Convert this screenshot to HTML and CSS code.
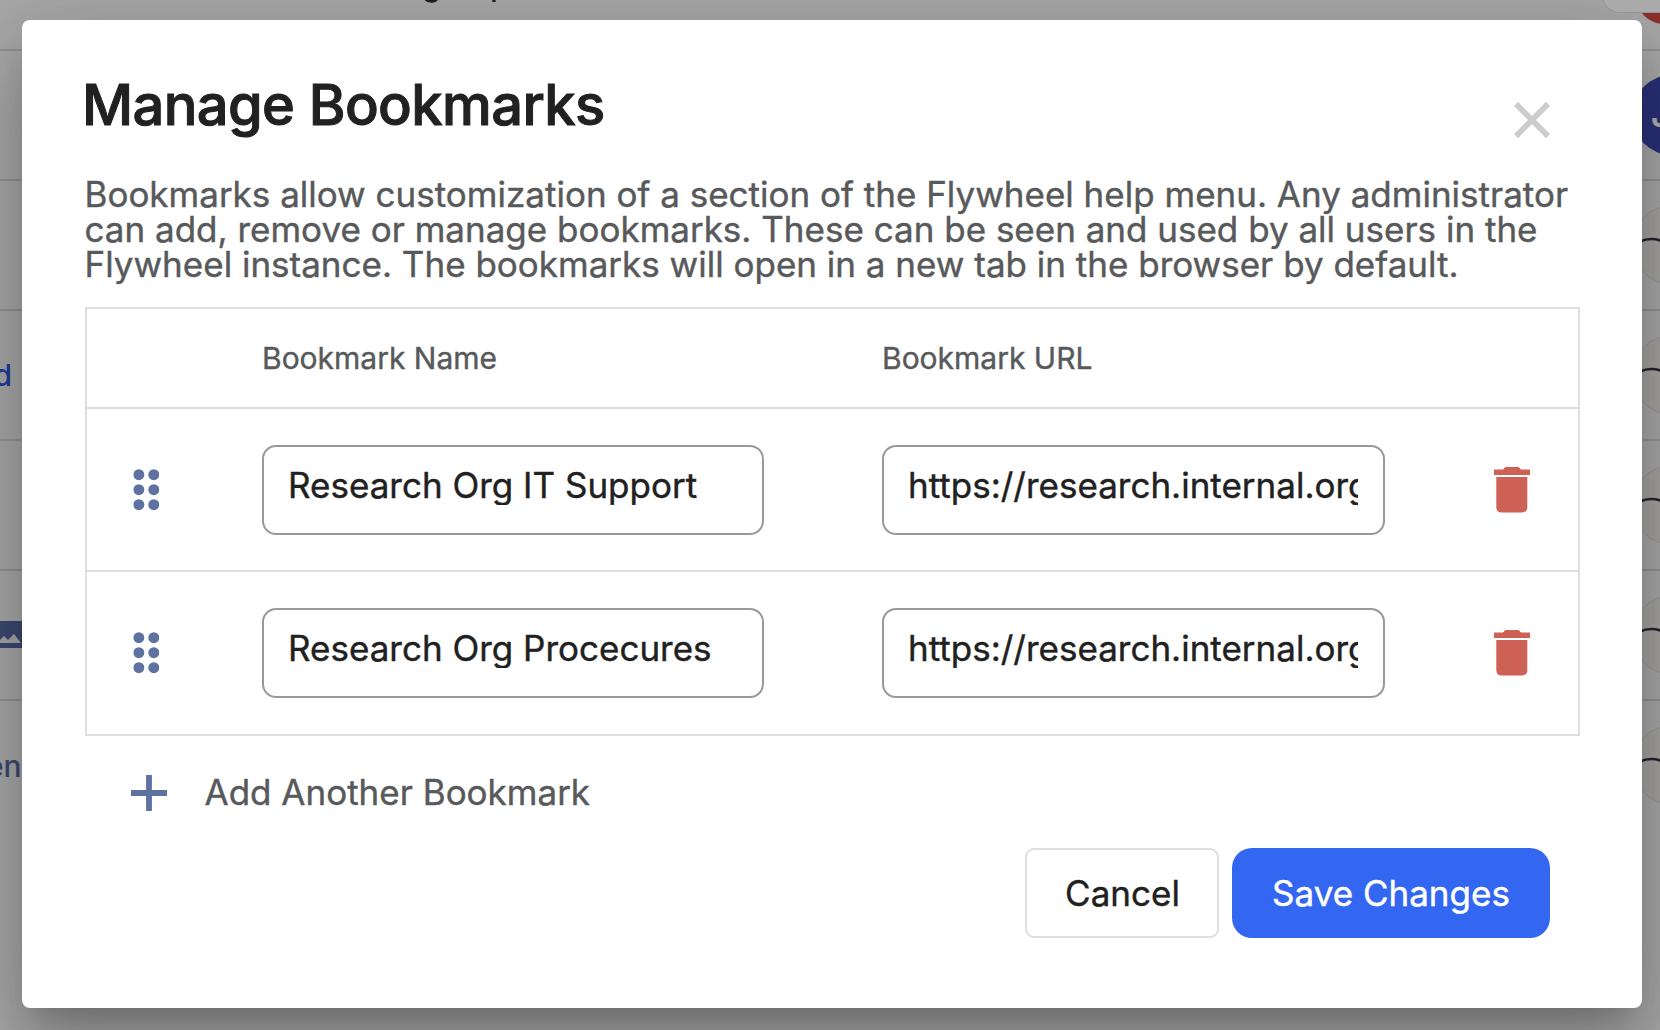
FILE: index.html
```html
<!DOCTYPE html>
<html lang="en">
<head>
  <meta charset="UTF-8">
  <meta name="viewport" content="width=device-width, initial-scale=1.0">
  <title>Manage Bookmarks</title>
  <link rel="stylesheet" href="styles.css">
</head>
<body>
  <!-- Page behind the dialog -->
  <div class="page">
    <div class="page-row page-row-first"><span class="page-heading">group</span></div>
    <div class="page-row"><span class="avatar avatar-blue">J</span></div>
    <div class="page-row"><span class="avatar"><svg width="78" height="78" viewBox="0 0 78 78"><path d="M7 35.5Q18 30.5 30 35.5" /></svg></span></div>
    <div class="page-row"><span class="page-link">d</span><span class="avatar"><svg width="78" height="78" viewBox="0 0 78 78"><path d="M7 35.5Q18 30.5 30 35.5" /></svg></span></div>
    <div class="page-row"><span class="avatar"><svg width="78" height="78" viewBox="0 0 78 78"><path d="M7 35.5Q18 30.5 30 35.5" /></svg></span></div>
    <div class="page-row">
      <svg class="page-image" width="30" height="27" viewBox="0 0 30 27"><path fill="#3b4970" d="M0 0h30v27H0z" /><path fill="#a8a8a8" d="M0 22v-3l4-4 4 4 6-6 7 9z" /></svg>
      <span class="avatar"><svg width="78" height="78" viewBox="0 0 78 78"><path d="M7 35.5Q18 30.5 30 35.5" /></svg></span>
    </div>
    <div class="page-row page-row-last"><span class="page-link page-link-muted">ent</span><span class="avatar"><svg width="78" height="78" viewBox="0 0 78 78"><path d="M7 35.5Q18 30.5 30 35.5" /></svg></span></div>
    <div class="page-panel"></div>
    <div class="page-badge"></div>
  </div>

  <!-- Dialog -->
  <div class="modal">
    <div class="modal-header">
      <h1>Manage Bookmarks</h1>
      <button class="close-button" aria-label="Close">
        <svg width="36" height="36" viewBox="0 0 36 36"><path d="M2 2l32 32M34 2L2 34" stroke="#ccc" stroke-width="5.8" /></svg>
      </button>
    </div>
    <p class="description">Bookmarks allow customization of a section of the Flywheel help menu. Any administrator<br>can add, remove or manage bookmarks. These can be seen and used by all users in the<br>Flywheel instance. The bookmarks will open in a new tab in the browser by default.</p>

    <div class="bookmarks">
      <div class="bookmark-row bookmark-head">
        <span></span>
        <span>Bookmark Name</span>
        <span>Bookmark URL</span>
        <span></span>
      </div>
      <div class="bookmark-row">
        <svg class="drag" width="26" height="42" viewBox="0 0 26 42"><circle cx="5.5" cy="5.7" r="5.5" /><circle cx="20.5" cy="5.7" r="5.5" /><circle cx="5.5" cy="20.7" r="5.5" /><circle cx="20.5" cy="20.7" r="5.5" /><circle cx="5.5" cy="35.7" r="5.5" /><circle cx="20.5" cy="35.7" r="5.5" /></svg>
        <div class="field"><span>Research Org IT Support</span></div>
        <div class="field"><span>https://research.internal.org/support</span></div>
        <svg class="trash" width="36" height="46" viewBox="0 0 36 46"><path d="M0 2.4h9L11.400 0h13.200L27 2.400h9V8H0zM2.300 10h31v30q0 5.500-5.500 5.500h-20q-5.500 0-5.500-5.500z" /></svg>
      </div>
      <div class="bookmark-row">
        <svg class="drag" width="26" height="42" viewBox="0 0 26 42"><circle cx="5.5" cy="5.7" r="5.5" /><circle cx="20.5" cy="5.7" r="5.5" /><circle cx="5.5" cy="20.7" r="5.5" /><circle cx="20.5" cy="20.7" r="5.5" /><circle cx="5.5" cy="35.7" r="5.5" /><circle cx="20.5" cy="35.7" r="5.5" /></svg>
        <div class="field"><span>Research Org Procecures</span></div>
        <div class="field"><span>https://research.internal.org/procedures</span></div>
        <svg class="trash" width="36" height="46" viewBox="0 0 36 46"><path d="M0 2.4h9L11.400 0h13.200L27 2.400h9V8H0zM2.300 10h31v30q0 5.500-5.500 5.500h-20q-5.500 0-5.500-5.500z" /></svg>
      </div>
    </div>

    <button class="add-button">
      <svg width="36" height="36" viewBox="0 0 36 36"><path d="M18 0v36M0 18h36" stroke="#5d72a0" stroke-width="5.8" /></svg>
      <span>Add Another Bookmark</span>
    </button>

    <div class="actions">
      <button class="cancel-button">Cancel</button>
      <button class="save-button">Save Changes</button>
    </div>
  </div>
</body>
</html>
```
FILE: styles.css
```css
* {
  box-sizing: border-box;
}
body {
  margin: 0;
  height: 1030px;
  overflow: hidden;
  padding: 20px 18px 22px 22px;
  position: relative;
  background-color: #a8a8a8;
  font-family: Inter, sans-serif;
  color: #212121;
}
button {
  border: none;
  background: none;
  padding: 0;
  font: inherit;
  color: inherit;
  cursor: pointer;
}
svg {
  display: block;
}

/* Dimmed page */
.page {
  position: absolute;
  inset: 0;
  overflow: hidden;
}
.page-row {
  position: relative;
  height: 130px;
  border-bottom: 2px solid #929292;
}
.page-row-first {
  height: 51px;
}
.page-row-last {
  border-bottom: none;
}
.page-heading {
  position: absolute;
  left: 422px;
  top: -34px;
  font-size: 31px;
  font-weight: 500;
}
.page-link {
  position: absolute;
  right: 1648px;
  top: 46px;
  font-size: 30px;
  line-height: 36px;
  font-weight: 500;
  color: #1f3d99;
}
.page-link-muted {
  right: auto;
  left: -14px;
  top: 47px;
  color: #3b4a6c;
}
.page-image {
  position: absolute;
  left: 0;
  top: 50px;
}
.avatar {
  position: absolute;
  left: 1632px;
  top: 24px;
  width: 80px;
  height: 80px;
  border: 1px solid #969696;
  border-radius: 50%;
  background-color: #a5a4a1;
}
.avatar path {
  fill: none;
  stroke: #23232f;
  stroke-width: 2.5;
}
.avatar-blue {
  border: none;
  background-color: #2a3178;
  color: #b0b0b0;
  font-size: 34px;
  font-weight: 600;
  line-height: 80px;
  padding-left: 19px;
}
.page-panel {
  position: absolute;
  left: 1602px;
  top: -40px;
  width: 100px;
  height: 53px;
  z-index: 2;
  border: 1px solid #949494;
  border-radius: 18px;
  background-color: #aaa;
}
.page-badge {
  position: absolute;
  left: 1636px;
  top: -32px;
  width: 56px;
  height: 56px;
  border-radius: 50%;
  background-color: #8c322c;
}

/* Dialog */
.modal {
  position: relative;
  display: flex;
  flex-direction: column;
  height: 988px;
  padding: 55px 62px 70px 63px;
  border-radius: 8px;
  background-color: #fff;
  box-shadow: 0 22px 30px -14px rgba(0, 0, 0, 0.2), 0 48px 76px 6px rgba(0, 0, 0, 0.14), 0 18px 92px 16px rgba(0, 0, 0, 0.12);
  -webkit-text-stroke: 0.4px;
}
.modal-header {
  display: flex;
  justify-content: space-between;
  height: 92px;
  padding-right: 30px;
}
h1 {
  margin: 0 0 0 -3px;
  font-size: 56px;
  font-weight: 500;
  line-height: 60px;
  letter-spacing: -0.6px;
  -webkit-text-stroke: 1px;
}
.close-button {
  align-self: flex-start;
  margin-top: 27px;
}
.description {
  margin: 10px 0 0 -0.5px;
  height: 130px;
  font-size: 35px;
  line-height: 35px;
  white-space: nowrap;
  color: #58595b;
}
.bookmarks {
  border: 2px solid #dedede;
}
.bookmark-row {
  display: grid;
  grid-template-columns: 175px 620px 608px 36px;
  align-items: center;
  height: 163px;
  border-bottom: 2px solid #dedede;
}
.bookmark-row:last-child {
  height: 162px;
  border-bottom: none;
}
.bookmark-head {
  height: 100px;
  font-size: 30px;
  color: #58595b;
}
.drag {
  margin-left: 46px;
  fill: #5d72a0;
}
.bookmark-row .drag {
  transform: translateX(0.3px);
}
.field {
  width: 502px;
  height: 90px;
  padding: 0 24px;
  border: 2px solid #999;
  border-radius: 14px;
  font-size: 35px;
  line-height: 76px;
}
.field:nth-child(3) {
  width: 503px;
  padding-right: 25px;
}
.field span {
  display: block;
  height: 58px;
  overflow: hidden;
  white-space: nowrap;
}
.trash {
  margin-left: 4.4px;
  fill: #cd6155;
}
.add-button {
  display: flex;
  align-items: center;
  gap: 37.5px;
  margin: 35px 0 0 46px;
  height: 44px;
  font-size: 35px;
  color: #58595b;
}
.add-button span {
  margin-top: -2px;
}
.actions {
  display: flex;
  justify-content: flex-end;
  gap: 13px;
  margin-top: 33px;
  padding-right: 30px;
}
.cancel-button,
.save-button {
  height: 90px;
  font-size: 35px;
}
.cancel-button {
  width: 194px;
  padding-left: 1px;
  border: 2px solid #dedede;
  border-radius: 9px;
}
.save-button {
  width: 318px;
  border-radius: 20px;
  background-color: #3367f2;
  color: #fff;
}
```
